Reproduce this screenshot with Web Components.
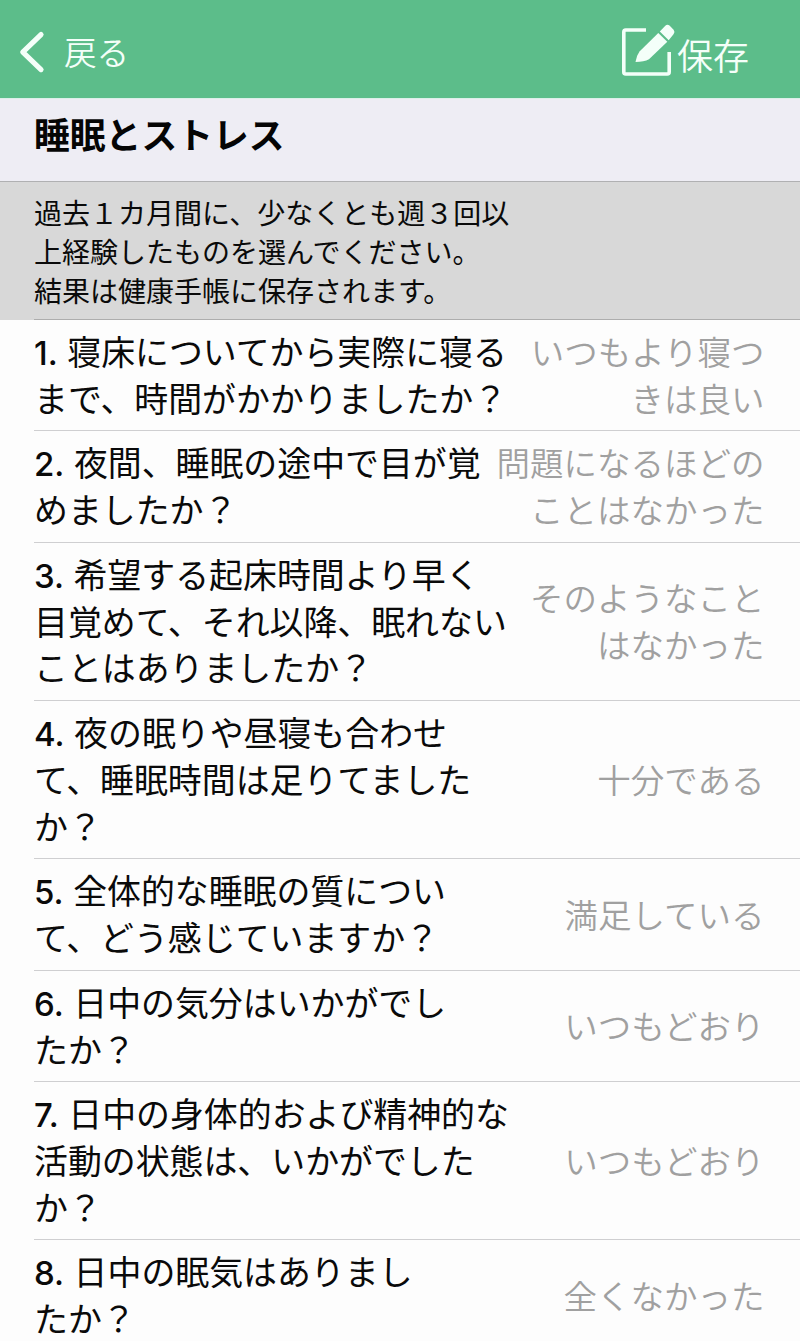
<!DOCTYPE html>
<html lang="ja">
<head>
  <meta charset="utf-8">
  <title>睡眠とストレス</title>
  <style>
    html {
      overflow: hidden;
    }
    body {
      margin: 0;
      background: #fdfdfd;
      color: #0a0a0a;
      font-family: Inter, "Noto Sans CJK JP", sans-serif;
    }
  </style>
</head>
<body>
  <health-survey>
    <nav-bar slot="nav">
      <span slot="back">戻る</span>
      <span slot="save">保存</span>
    </nav-bar>
    <survey-header slot="header">
      睡眠とストレス
      <span slot="note">過去１カ月間に、少なくとも週３回以<br>上経験したものを選んでください。<br>結果は健康手帳に保存されます。</span>
    </survey-header>
    <survey-row number="1">寝床についてから実際に寝る<br>まで、時間がかかりましたか？<span slot="answer">いつもより寝つ<br>きは良い</span></survey-row>
    <survey-row number="2">夜間、睡眠の途中で目が覚<br>めましたか？<span slot="answer">問題になるほどの<br>ことはなかった</span></survey-row>
    <survey-row number="3">希望する起床時間より早く<br>目覚めて、それ以降、眠れない<br>ことはありましたか？<span slot="answer">そのようなこと<br>はなかった</span></survey-row>
    <survey-row number="4">夜の眠りや昼寝も合わせ<br>て、睡眠時間は足りてました<br>か？<span slot="answer">十分である</span></survey-row>
    <survey-row number="5">全体的な睡眠の質につい<br>て、どう感じていますか？<span slot="answer">満足している</span></survey-row>
    <survey-row number="6">日中の気分はいかがでし<br>たか？<span slot="answer">いつもどおり</span></survey-row>
    <survey-row number="7">日中の身体的および精神的な<br>活動の状態は、いかがでした<br>か？<span slot="answer">いつもどおり</span></survey-row>
    <survey-row number="8">日中の眠気はありまし<br>たか？<span slot="answer">全くなかった</span></survey-row>
  </health-survey>

  <script>
    class HealthSurvey extends HTMLElement {
      constructor() {
        super();
        this._root = this.attachShadow({ mode: 'open' });
      }

      connectedCallback() {
        this._root.innerHTML = `
          <style>
            :host {
              display: flex;
              flex-direction: column;
              height: 1341px;
              overflow: hidden;
            }
            .rows {
              display: flex;
              flex-direction: column;
              padding-left: 34px;
            }
          </style>
          <slot name="nav"></slot>
          <slot name="header"></slot>
          <div class="rows"><slot></slot></div>
        `;
      }
    }

    class NavBar extends HTMLElement {
      constructor() {
        super();
        this._root = this.attachShadow({ mode: 'open' });
      }

      connectedCallback() {
        this._root.innerHTML = `
          <style>
            :host {
              display: flex;
              flex: none;
              justify-content: space-between;
              box-sizing: border-box;
              height: 98px;
              padding: 0 51px 0 18px;
              background: #5cbd8a;
              color: #f4fff9;
              white-space: nowrap;
            }
            div {
              display: flex;
              align-items: flex-start;
            }
            svg {
              display: block;
              flex: none;
            }
            .back {
              font-size: 32.6px;
              line-height: 40px;
              font-weight: 350;
            }
            .back svg {
              margin: 30px 18px 0 0;
            }
            .back slot {
              display: block;
              margin-top: 33px;
            }
            .save {
              font-size: 36px;
              line-height: 40px;
              font-weight: 350;
            }
            .save svg {
              margin: 22px 1px 0 0;
            }
            .save slot {
              display: block;
              margin-top: 37px;
            }
          </style>
          <div class="back">
            <svg width="28" height="44" viewBox="0 0 28 44" fill="none" stroke="#f4fff9" stroke-width="5.2" stroke-linecap="round" stroke-linejoin="round">
              <path d="M23 4.600 4.800 22.200 23 39.600"/>
            </svg>
            <slot name="back"></slot>
          </div>
          <div class="save">
            <svg width="54" height="56" viewBox="0 0 54 56">
              <path d="M24 8H3.800Q1.800 8 1.800 10V50Q1.800 52 3.800 52H45.200Q47.200 52 47.200 50V30" fill="none" stroke="#f4fff9" stroke-width="3.600"/>
              <path d="M13.500 40Q14.200 34 17.500 29.500L36.300 11 45.300 19.800 27 37.300Q22 40 13.500 40Z" fill="#f4fff9"/>
              <path d="M37.800 9.500 43.300 3.800Q45.300 1.600 47.500 3.600L51.600 7.800Q53.400 10 51.500 12.300L46.700 18.200Z" fill="#f4fff9"/>
            </svg>
            <slot name="save"></slot>
          </div>
        `;
      }
    }

    class SurveyHeader extends HTMLElement {
      constructor() {
        super();
        this._root = this.attachShadow({ mode: 'open' });
      }

      connectedCallback() {
        this._root.innerHTML = `
          <style>
            :host {
              display: block;
              flex: none;
              white-space: nowrap;
            }
            h1 {
              box-sizing: border-box;
              height: 84px;
              margin: 0;
              padding: 13px 34px 0;
              border-top: 1px solid #dcefe9;
              border-bottom: 1px solid #b0b0b2;
              background: #eeedf4;
              color: #050505;
              font-size: 35.8px;
              line-height: 48px;
              font-weight: 700;
            }
            .note {
              box-sizing: border-box;
              height: 138px;
              padding: 13px 34px 0;
              background: linear-gradient(#adadad, #adadad) 34px 100% / 100% 1px no-repeat #d8d8d8;
              font-size: 28px;
              line-height: 39px;
            }
          </style>
          <h1><slot></slot></h1>
          <div class="note"><slot name="note"></slot></div>
        `;
      }
    }

    class SurveyRow extends HTMLElement {
      constructor() {
        super();
        this._root = this.attachShadow({ mode: 'open' });
      }

      connectedCallback() {
        this._root.innerHTML = `
          <style>
            :host {
              display: flex;
              flex: none;
              align-items: center;
              justify-content: space-between;
              padding: 9.9px 35.500px 6.700px 0;
              border-bottom: 1px solid #cfcfd1;
              font-size: 33.9px;
              line-height: 46.9px;
              white-space: nowrap;
            }
            .number {
              font-size: 33px;
              font-weight: 500;
            }
            .answer {
              color: #a0a0a0;
              font-size: 33.5px;
              font-weight: 350;
              text-align: right;
            }
          </style>
          <div class="question"><span class="number"></span> <slot></slot></div>
          <div class="answer"><slot name="answer"></slot></div>
        `;
        this._root.querySelector('.number').textContent = this.getAttribute('number') + '.';
      }
    }

    window.customElements.define('health-survey', HealthSurvey);
    window.customElements.define('nav-bar', NavBar);
    window.customElements.define('survey-header', SurveyHeader);
    window.customElements.define('survey-row', SurveyRow);
  </script>
</body>
</html>
